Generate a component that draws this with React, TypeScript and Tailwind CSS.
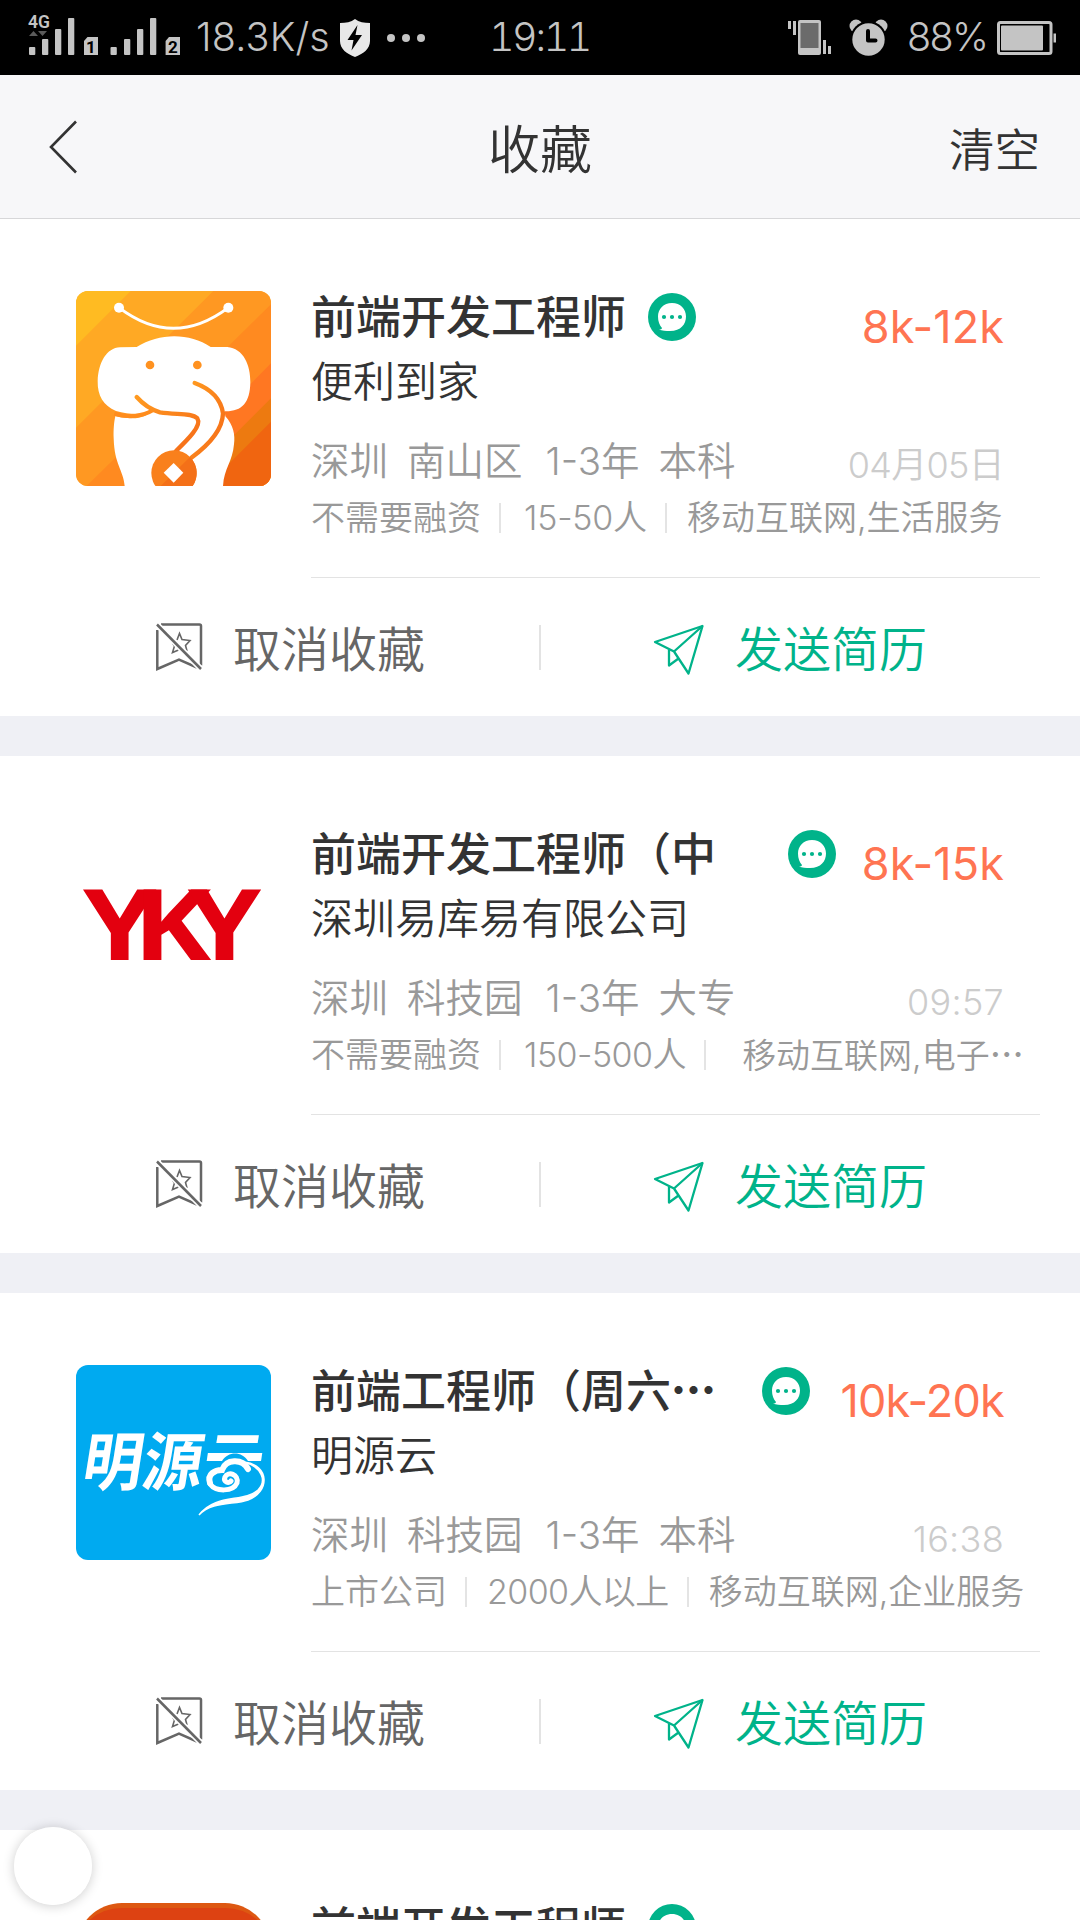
import React from 'react';

type Job = {
  title: string;
  company: string;
  salary: string;
  salaryTracking?: string;
  facts: string[];
  time: string;
  tags: string[];
  wideTag?: boolean;
  badge: string;
  logo: React.ReactNode;
};

const CJK = "font-['Noto_Sans_CJK_SC',sans-serif]";

function StatusBar() {
  return (
    <div className="flex h-[75px] items-center bg-black pl-[28px] text-[#c4c4c4]">
      <svg width="153" height="75" viewBox="0 0 153 75" fill="#c4c4c4" className="shrink-0">
        <text x="0" y="28" fontSize="17.5" fontWeight="600" fontFamily="Roboto" textLength="22">4G</text>
        <path d="M1 36l4.500-5 4.500 5zM10 31h9l-4.500 5z" fill="#5a5a5a" />
        <rect x="1" y="47" width="6.300" height="8" rx="1" />
        <rect x="14" y="39" width="6.300" height="16" rx="1" />
        <rect x="27" y="29" width="6.300" height="26" rx="1" />
        <rect x="40" y="18" width="6.300" height="37" rx="1" />
        <path d="M59.500 37H70v18H56V41z" />
        <text x="58" y="53" fontSize="17" fontWeight="700" fill="#000" fontFamily="Roboto">1</text>
        <rect x="82.500" y="47" width="6.300" height="8" rx="1" />
        <rect x="96" y="39" width="6.300" height="16" rx="1" />
        <rect x="109" y="29" width="6.300" height="26" rx="1" />
        <rect x="122" y="18" width="6.300" height="37" rx="1" />
        <path d="M141 37h11v18h-14.400V41z" />
        <text x="140" y="53" fontSize="17" fontWeight="700" fill="#000" fontFamily="Roboto">2</text>
      </svg>
      <span className="ml-[15px] w-[139px] whitespace-nowrap text-[39.500px] font-light leading-[77px] tracking-[0.200px]">18.3K/s</span>
      <svg width="32" height="40" viewBox="0 0 32 40" className="ml-[4px] shrink-0">
        <path d="M16 1c4 3 9 4 15 4v18c0 8-7 13-15 16C8 36 1 31 1 23V5c6 0 11-1 15-4z" fill="#e8e8e8" />
        <path d="M18.500 7L8.500 22h6l-2 10.500L23 17h-6.500z" fill="#000" />
      </svg>
      <svg width="38" height="10" viewBox="0 0 38 10" fill="#c4c4c4" className="ml-[16px] shrink-0">
        <circle cx="4" cy="5" r="4" />
        <circle cx="19" cy="5" r="4" />
        <circle cx="34" cy="5" r="4" />
      </svg>
      <span className="ml-[64px] w-[120px] whitespace-nowrap text-[39.500px] font-light leading-[79px] tracking-[-2.500px]">
        <span className="tabular-nums">19</span>:<span className="tabular-nums">11</span>
      </span>
      <svg width="43" height="36" viewBox="0 0 43 36" fill="#c4c4c4" className="ml-auto shrink-0">
        <rect x="0" y="1" width="3" height="8" />
        <rect x="5" y="1" width="3" height="14" />
        <rect x="10" y="0" width="23" height="35" rx="2" />
        <rect x="12.500" y="3" width="18" height="25" fill="#6b6b6b" />
        <rect x="35" y="20" width="3" height="14" />
        <rect x="40" y="26" width="3" height="8" />
      </svg>
      <svg width="39" height="38" viewBox="0 0 38 38" className="ml-[18px] mr-[1px] shrink-0">
        <circle cx="6.500" cy="7" r="6.500" fill="#c4c4c4" />
        <circle cx="31.500" cy="7" r="6.500" fill="#c4c4c4" />
        <circle cx="19" cy="20.500" r="18.300" fill="#000" />
        <circle cx="19" cy="20.500" r="16.200" fill="#c4c4c4" />
        <path d="M18.500 12v9.500h7.500" fill="none" stroke="#000" strokeWidth="4" strokeLinecap="round" strokeLinejoin="round" />
      </svg>
      <span className="ml-[18px] w-[82px] whitespace-nowrap text-[39.500px] font-light leading-[77px] tracking-[-1.600px]">88%</span>
      <svg width="60" height="34" viewBox="0 0 60 34" className="ml-[8px] mr-[23px] shrink-0">
        <rect x="1.500" y="1.500" width="52.500" height="31" rx="2" fill="none" stroke="#c4c4c4" strokeWidth="3" />
        <rect x="4" y="4.500" width="42" height="25" rx="1" fill="#c4c4c4" />
        <rect x="56.500" y="12.500" width="2.500" height="9" fill="#c4c4c4" />
      </svg>
    </div>
  );
}

function Header() {
  return (
    <header className="grid h-[144px] grid-cols-3 items-center border-b border-[#d7d7d9] bg-[#f7f7f9] text-[#333]">
      <svg width="30" height="56" viewBox="0 0 30 56" fill="none" stroke="#333" strokeWidth="2.600" className="ml-[48px]">
        <path d="M28 2.500L3 28l25 25.500" />
      </svg>
      <h1 className={`${CJK} text-center text-[52px] font-[350] leading-[60px]`}>收藏</h1>
      <button className={`${CJK} justify-self-end pr-[40px] text-[45.500px] font-[350] leading-[56px]`}>清空</button>
    </header>
  );
}

function ChatBadge({ className }: { className: string }) {
  return (
    <svg width="48" height="48" viewBox="0 0 48 48" className={`mt-[2px] shrink-0 ${className}`}>
      <circle cx="24" cy="24" r="24" fill="#00b38a" />
      <path d="M24 10c8.500 0 14 6 14 13.500S33 38 22 38c-4 0-8-.3-11-1.200 2-.3 2.600-.8 3-1.800-2.500-3-4-6.500-4-11.500C10 16 15.500 10 24 10z" fill="#fff" />
      <circle cx="16" cy="24" r="2.100" fill="#00b38a" />
      <circle cx="24" cy="24" r="2.100" fill="#00b38a" />
      <circle cx="32" cy="24" r="2.100" fill="#00b38a" />
    </svg>
  );
}

function ElephantLogo() {
  return (
    <svg viewBox="48 48 585 585" className="h-[195px] w-[195px] rounded-[12px]">
      <defs>
        <linearGradient id="trunk" x1="0" y1="0" x2="1" y2="1">
          <stop offset="0" stopColor="#ff9a20" />
          <stop offset="1" stopColor="#f56a18" />
        </linearGradient>
      </defs>
      <rect x="48" y="48" width="585" height="585" fill="#ffa924" />
      <path d="M48 48H212L48 212z" fill="#ffbb22" />
      <path d="M460 48H633V633H48V458z" fill="#ff9822" />
      <path d="M633 88V633H80z" fill="#ff8a20" />
      <path d="M633 265V633H270z" fill="#ff7722" />
      <path d="M633 370V633H370z" fill="#ed7a10" />
      <path d="M633 440V633H440z" fill="#f06510" />
      <path d="M177 98Q340 222 505 98" fill="none" stroke="#fff" strokeWidth="9" />
      <circle cx="177" cy="98" r="15" fill="#fff" />
      <circle cx="505" cy="98" r="15" fill="#fff" />
      <path d="M166 424C235 438 255 425 278 408L300 380H490L496 424C520 450 526 480 522 508C518 560 492 580 489 633H194C190 585 163 570 161 490C160 465 162 440 166 424z" fill="#fff" />
      <path d="M230 216C300 172 390 174 452 216H502C550 220 572 270 571 322C570 385 545 410 495 409H280C255 418 210 420 168 408C130 392 112 362 113 318C115 262 140 219 180 217z" fill="#fff" />
      <path d="M163 416C205 430 250 423 278 406" fill="none" stroke="#ff8c1c" strokeWidth="12" />
      <g fill="none" stroke="url(#trunk)" strokeWidth="13" strokeLinecap="round">
        <path d="M230 366Q260 400 300 412C350 420 395 412 412 430C426 452 385 492 348 528" />
        <path d="M404 324Q480 352 489 415Q487 480 394 548" />
      </g>
      <circle cx="270" cy="270" r="13" fill="#ff9220" />
      <circle cx="412" cy="270" r="13" fill="#ff9220" />
      <circle cx="342" cy="594" r="68" fill="#f9801c" />
      <path d="M390 546A68 68 0 0 1 398 633H302z" fill="#f47018" />
      <path d="M341 564l29 29-29 30-30-30z" fill="#fff" />
    </svg>
  );
}

function YkyLogo() {
  return (
    <svg viewBox="0 0 195 195" className="h-[195px] w-[195px] rounded-[12px] bg-white" fill="#e3000f">
      <g transform="translate(7 132) scale(1.2 1)">
        <text fontFamily="Open Sans" fontWeight="700" fontSize="98" letterSpacing="-19.5">YKY</text>
      </g>
    </svg>
  );
}

function MingyuanLogo() {
  return (
    <svg viewBox="0 0 195 195" className="h-[195px] w-[195px] rounded-[12px] bg-[#00aaf0]">
      <g transform="translate(4 120) skewX(-9) scale(1 1.06)">
        <text fill="#fff" fontFamily="Noto Sans CJK SC" fontWeight="700" fontSize="60" textLength="180">明源云</text>
      </g>
      <path d="M124 136V104L136 96H146C152 86 166 86 172 96L192 98V136z" fill="#00aaf0" />
      <path d="M134 118C131 109 139 105 146 105C150 94 166 93 172 104" fill="none" stroke="#fff" strokeWidth="6" strokeLinecap="round" />
      <path d="M168 97C186 102 191 116 182 125C168 138 140 128 123 150C136 136 158 140 172 135C194 127 194 100 168 97z" fill="#fff" stroke="#fff" strokeWidth="1.500" />
      <path d="M134 119C140 127 157 127 161 118C163 109 152 106 149 112C147 117 153 119 155 116" fill="none" stroke="#fff" strokeWidth="5" strokeLinecap="round" />
    </svg>
  );
}

const jobs: Job[] = [
  {
    title: '前端开发工程师', company: '便利到家', salary: '8k-12k', salaryTracking: 'tracking-[0.100px]',
    facts: ['深圳', '南山区', '1-3年', '本科'], time: '04月05日',
    tags: ['不需要融资', '15-50人', '移动互联网,生活服务'],
    badge: 'ml-[22px] mr-auto', logo: <ElephantLogo />,
  },
  {
    title: '前端开发工程师（中', company: '深圳易库易有限公司', salary: '8k-15k', salaryTracking: 'tracking-[0.100px]',
    facts: ['深圳', '科技园', '1-3年', '大专'], time: '09:57',
    tags: ['不需要融资', '150-500人', '移动互联网,电子…'], wideTag: true,
    badge: 'absolute left-[477px] top-0', logo: <YkyLogo />,
  },
  {
    title: '前端工程师（周六…', company: '明源云', salary: '10k-20k', salaryTracking: 'tracking-[-0.800px]',
    facts: ['深圳', '科技园', '1-3年', '本科'], time: '16:38',
    tags: ['上市公司', '2000人以上', '移动互联网,企业服务'],
    badge: 'absolute left-[451px] top-0', logo: <MingyuanLogo />,
  },
  {
    title: '前端开发工程师', company: '', salary: '', facts: [], time: '', tags: [],
    badge: 'ml-[22px] mr-auto',
    logo: <div className="mt-[1px] h-[195px] w-[195px] rounded-[46px] border-t-[5px] border-[#dd5812] bg-[#dd4212]" />,
  },
];

function Tag({ text, first, wide }: { text: string; first: boolean; wide: boolean }) {
  const cut = text.endsWith('…');
  const tracking = text.startsWith('2')
    ? 'tracking-[-0.600px]'
    : text.startsWith('150')
      ? 'ml-[3px] tracking-[-0.500px]'
      : text.startsWith('1')
        ? 'ml-[3px] tracking-[-0.200px]'
        : '';
  return (
    <>
      {!first && <i className={`ml-[18px] h-[30px] w-[2px] bg-[#e4e4e4] ${wide ? 'mr-[36px]' : 'mr-[20px]'}`} />}
      <span className={tracking}>
        {cut ? text.slice(0, -1) : text}
        {cut && <span className={`${CJK} font-medium`}>…</span>}
      </span>
    </>
  );
}

function JobTitle({ text }: { text: string }) {
  const cut = text.endsWith('…');
  return (
    <h2 className={`${CJK} -mt-[2px] whitespace-nowrap text-[45px] font-medium leading-[50px] text-[#333]`}>
      {cut ? text.slice(0, -1) : text}
      {cut && <span className="font-black">…</span>}
    </h2>
  );
}

function JobCard({ job }: { job: Job }) {
  return (
    <article className="h-[497px] shrink-0 bg-white">
      <div className="flex h-[359px] pl-[76px] pt-[72px]">
        <div className="shrink-0">{job.logo}</div>
        <div className="ml-[40px] flex w-[729px] flex-col border-b border-[#e3e3e3]">
          <div className="relative flex h-[50px] items-center pr-[36px]">
            <JobTitle text={job.title} />
            <ChatBadge className={job.badge} />
            <span className={`ml-auto mt-[22px] text-[45px] font-normal leading-[50px] text-[#ff7452] ${job.salaryTracking ?? ''}`}>{job.salary}</span>
          </div>
          {job.company && (
            <>
              <div className="mt-[16px] h-[50px] whitespace-nowrap text-[42px] font-[350] leading-[50px] text-[#333]">{job.company}</div>
              <div className="mt-[30px] flex h-[48px] items-center pr-[36px] text-[38.500px] leading-[48px] text-[#999]">
                <div className="flex gap-[19px] whitespace-nowrap font-[350]">
                  {job.facts.map((f) => <span key={f} className={f.startsWith('1') ? 'ml-[4px]' : ''}>{f}</span>)}
                </div>
                <time className={`ml-auto mt-[7px] whitespace-nowrap text-[36px] font-[350] text-[#ccc] ${job.time.includes(':') ? 'tracking-[0.300px]' : 'tracking-[-0.700px]'}`}>{job.time}</time>
              </div>
              <div className="mt-[13px] flex h-[40px] items-center whitespace-nowrap text-[34px] font-[350] leading-[40px] text-[#999]">
                {job.tags.map((t, i) => <Tag key={t} text={t} first={i === 0} wide={i === 2 && !!job.wideTag} />)}
              </div>
            </>
          )}
        </div>
      </div>
      {job.company && (
        <div className={`${CJK} flex h-[138px] items-center text-[48px] font-[350] leading-[60px]`}>
          <button className="flex h-[45px] w-[541px] items-center border-r-2 border-[#e3e3e3] pl-[155px] text-[#666]">
            <svg width="48" height="50" viewBox="0 0 48 50" fill="none" stroke="#666" strokeWidth="2.500">
              <path d="M6 2.500H44.500Q46 2.500 46 4V43.500M2.300 8V47L24 37.500L42 45.500" />
              <path d="M22 18L24.500 11.500L27 17.500L35 18.500L30.500 23.500L32 29M17.500 21L19.500 24L17.500 30.500L23.500 28" strokeWidth="1.600" />
              <path d="M2 2.500L46 47" stroke="#fff" strokeWidth="6" />
              <path d="M2 2.500L46 47" />
            </svg>
            <span className="-mt-[2px] ml-[30px]">取消收藏</span>
          </button>
          <button className="flex items-center pl-[112px] text-[#00b38a]">
            <svg width="52" height="52" viewBox="0 0 52 52" fill="none" stroke="#00b38a" strokeWidth="2.300" strokeLinejoin="round" className="mt-[6px]">
              <path d="M49.500 2L2 18L21 27.500L35.500 49.500z" />
              <path d="M49.500 2L21 27.500M16 25.500V41.500L25.500 34.500" />
            </svg>
            <span className="-mt-[2px] ml-[30px]">发送简历</span>
          </button>
        </div>
      )}
    </article>
  );
}

export default function App() {
  return (
    <div className="relative h-[1920px] w-[1080px] overflow-hidden bg-[#eff0f5] font-['Inter','Noto_Sans_CJK_SC',sans-serif]">
      <StatusBar />
      <Header />
      <main className="flex flex-col gap-[40px]">
        {jobs.map((job, i) => <JobCard key={i} job={job} />)}
      </main>
      <div className="absolute left-[14px] top-[1827px] h-[78px] w-[78px] rounded-full bg-white/90 shadow-[0_1px_12px_rgba(0,0,0,0.2)]" />
    </div>
  );
}
